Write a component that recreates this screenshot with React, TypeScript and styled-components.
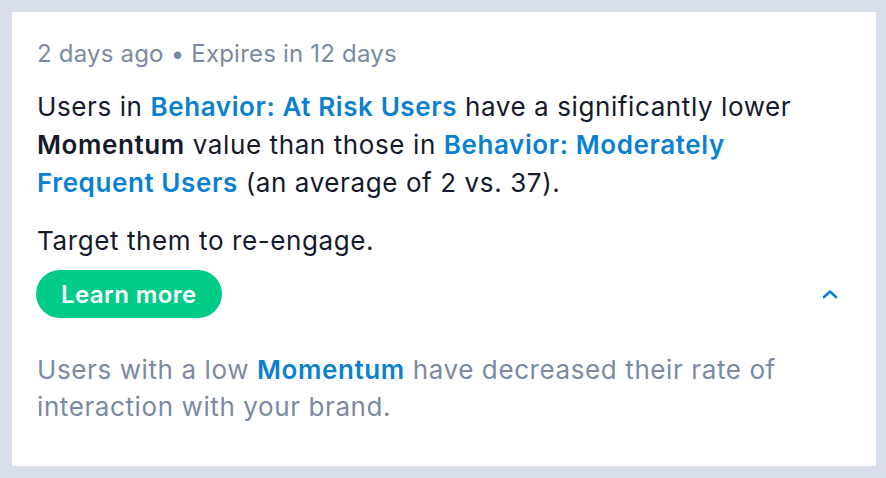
import React from "react";
import styled, { createGlobalStyle } from "styled-components";

const GlobalStyle = createGlobalStyle`
  html, body {
    margin: 0;
    padding: 0;
    background: #d8deea;
  }
  body {
    font-family: Inter, "Noto Sans", sans-serif;
  }
`;

const Page = styled.div`
  width: 886px;
  height: 478px;
  box-sizing: border-box;
  padding: 12px 10px 12px 12px;
`;

const Card = styled.div`
  background: #ffffff;
  height: 100%;
  box-sizing: border-box;
  padding: 27px 30px 0 24px;
  display: flex;
  flex-direction: column;
`;

const Meta = styled.div`
  font-size: 24px;
  letter-spacing: 0.2px;
  line-height: 30px;
  color: #7a8aa3;
  margin-bottom: 19px;
  padding-left: 1px;
`;

const Body = styled.p`
  margin: 0;
  padding-left: 1px;
  max-width: 768px;
  font-size: 26px;
  letter-spacing: 0.6px;
  line-height: 38px;
  color: #141a2c;
`;

const Gap = styled.div<{ h: number }>`
  height: ${({ h }) => h}px;
  flex-shrink: 0;
`;

const Link = styled.span`
  color: #0a80d0;
  font-weight: 600;
`;

const Strong = styled.span`
  font-weight: 600;
`;

const ActionRow = styled.div`
  display: flex;
  align-items: center;
  justify-content: space-between;
`;

const LearnButton = styled.button`
  height: 48px;
  padding: 0 25px;
  border: none;
  border-radius: 24px;
  background: #00cc88;
  color: #ffffff;
  font-family: inherit;
  font-size: 24px;
  letter-spacing: 0.4px;
  font-weight: 600;
  cursor: pointer;
`;

const Toggle = styled.button`
  background: none;
  border: none;
  padding: 0;
  margin-right: 8px;
  display: flex;
  cursor: pointer;
`;

const Note = styled.p`
  margin: 0;
  padding-left: 1px;
  max-width: 768px;
  font-size: 26px;
  letter-spacing: 0.6px;
  line-height: 37px;
  color: #7a8aa3;
`;

export default function App() {
  return (
    <>
      <GlobalStyle />
      <Page>
        <Card>
          <Meta>2 days ago • Expires in 12 days</Meta>
          <Body>
            Users in <Link>Behavior: At Risk Users</Link> have a significantly lower{" "}
            <Strong>Momentum</Strong> value than those in{" "}
            <Link>Behavior: Moderately Frequent Users</Link> (an average of 2 vs. 37).
          </Body>
          <Gap h={20} />
          <Body>Target them to re-engage.</Body>
          <Gap h={10} />
          <ActionRow>
            <LearnButton>Learn more</LearnButton>
            <Toggle aria-label="Collapse">
              <svg width="16" height="10" viewBox="0 0 16 10">
                <path
                  d="M2 8 L8 2.5 L14 8"
                  fill="none"
                  stroke="#0a80d0"
                  strokeWidth="2.6"
                  strokeLinecap="round"
                  strokeLinejoin="round"
                />
              </svg>
            </Toggle>
          </ActionRow>
          <Gap h={33} />
          <Note>
            Users with a low <Link>Momentum</Link> have decreased their rate of interaction
            with your brand.
          </Note>
        </Card>
      </Page>
    </>
  );
}
